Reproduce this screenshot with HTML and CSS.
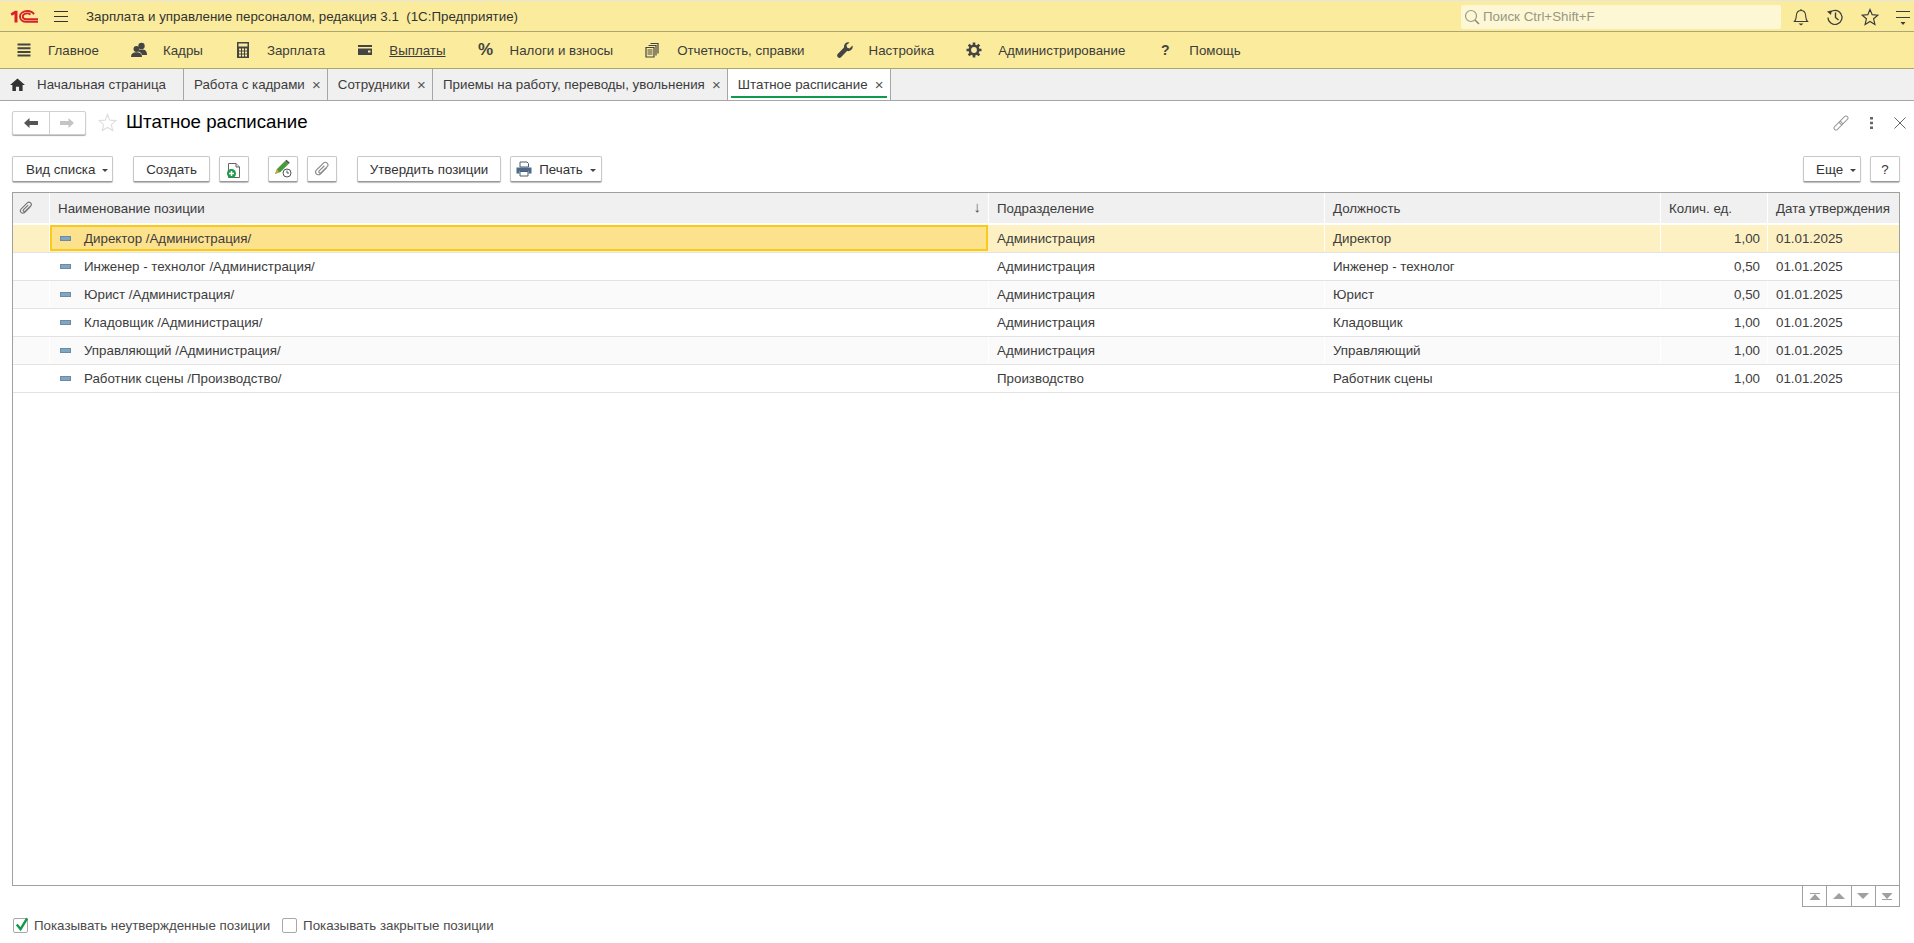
FILE: index.html
```html
<!DOCTYPE html>
<html lang="ru">
<head>
    <meta charset="UTF-8">
    <title>Штатное расписание</title>
    <link rel="stylesheet" href="styles.css">
</head>
<body>
    <div class="app">
        <header class="title-bar">
            <svg class="logo" viewBox="0 0 28 13" width="28" height="13">
                <path d="M0.5 3.5 L5 .8 H7.5 V12.5 H4.5 V4.2 L1.8 5.8Z" fill="#d8202a"/>
                <path d="M24 4.2 C22.5 1.8 20 1 17.5 1 C13.5 1 10 3 10 6.5 C10 10 13 11.8 16 11.8 H28" fill="none" stroke="#d8202a" stroke-width="1.9"/>
                <path d="M20.5 4.6 C19.5 3.7 18.5 3.4 17.3 3.4 C14.8 3.4 12.8 4.6 12.8 6.5 C12.8 8.2 14.5 9.3 16.5 9.3 H28" fill="none" stroke="#d8202a" stroke-width="1.9"/>
            </svg>
            <svg class="burger" viewBox="0 0 14 11" width="14" height="11"><path d="M0 .5H14M0 5.5H14M0 10.5H14" stroke="#333" fill="none"/></svg>
            <span class="app-name">Зарплата и управление персоналом, редакция 3.1&nbsp; (1С:Предприятие)</span>
            <div class="search">
                <svg viewBox="0 0 16 16" width="16" height="16"><circle cx="7" cy="7" r="5.5" fill="none" stroke="#9a9a86" stroke-width="1.2"/><path d="M11 11 L15 15" stroke="#8a8a78" stroke-width="1.6"/></svg>
                <span>Поиск Ctrl+Shift+F</span>
            </div>
            <div class="bar-icons">
                <svg viewBox="0 0 16 18" width="16" height="18"><path d="M1.5 13.5 C3.5 11.5 3 9 3.5 6.5 C4 3.5 6 2.5 8 2.5 C10 2.5 12 3.5 12.5 6.5 C13 9 12.5 11.5 14.5 13.5Z M8 1V2.5" fill="none" stroke="#3c3c3c" stroke-width="1.1"/><path d="M5.5 15.5H10.5L8 17.5Z" fill="#3c3c3c"/></svg>
                <svg viewBox="0 0 18 18" width="18" height="18"><path d="M3.6 5 A7 7 0 1 1 2 9.5" fill="none" stroke="#3c3c3c" stroke-width="1.2"/><path d="M1 3.5 L5.5 2.5 L5 7Z" fill="#3c3c3c"/><path d="M9.5 4.5V9.5L12.5 12" fill="none" stroke="#3c3c3c" stroke-width="1.4"/></svg>
                <svg viewBox="0 0 18 18" width="18" height="18"><path d="M9 1.5 L11.2 6.7 L16.8 7.2 L12.6 10.8 L13.9 16.4 L9 13.5 L4.1 16.4 L5.4 10.8 L1.2 7.2 L6.8 6.7Z" fill="none" stroke="#3c3c3c" stroke-width="1.2"/></svg>
                <svg viewBox="0 0 14 18" width="14" height="18"><path d="M0 3.5H14M0 9.5H14" stroke="#3c3c3c" fill="none"/><path d="M4.5 14H9.5L7 17Z" fill="#3c3c3c"/></svg>
            </div>
        </header>

        <nav class="sections">
            <a class="section"><svg viewBox="0 0 16 16" width="16" height="16"><path d="M1.5 2.5H14.5M1.5 6.2H14.5M1.5 9.9H14.5M1.5 13.6H14.5" stroke="#444" stroke-width="2" fill="none"/></svg>Главное</a>
            <a class="section"><svg viewBox="0 0 16 16" width="16" height="16"><circle cx="10.5" cy="4" r="3.2" fill="#444"/><path d="M6.5 9 C8 7 13 7 14.5 8.5 C16 10 16 12 16 13 H11 C11 11 9 10 6.5 9Z" fill="#444"/><circle cx="5.5" cy="7" r="3" fill="#444"/><path d="M0 15 C0 11 3 10.2 5.5 10.2 C8 10.2 11 11 11 15Z" fill="#444"/></svg>Кадры</a>
            <a class="section"><svg viewBox="0 0 16 16" width="16" height="16"><path fill-rule="evenodd" d="M2 0H14V16H2Z M3.5 1.5V4.5H12.5V1.5Z M4 6.5V8.5H6V6.5Z M7 6.5V8.5H9V6.5Z M10 6.5V8.5H12V6.5Z M4 9.5V11.5H6V9.5Z M7 9.5V11.5H9V9.5Z M10 9.5V11.5H12V9.5Z M4 12.5V14.5H6V12.5Z M7 12.5V14.5H9V12.5Z M10 12.5V14.5H12V12.5Z" fill="#444"/></svg>Зарплата</a>
            <a class="section current"><svg viewBox="0 0 16 16" width="16" height="16"><path fill-rule="evenodd" d="M1 3H15V5H1Z M1 6.5H15V13H1Z M11 8.5V10.5H13.5V8.5Z" fill="#444"/></svg><span class="section-name">Выплаты</span></a>
            <a class="section"><span class="percent">%</span>Налоги и взносы</a>
            <a class="section"><svg viewBox="0 0 16 16" width="16" height="16"><path d="M5.5 1.5H13V11.5M3.5 3.5H11V13.5M1 5.5H9V15H1Z" fill="#fbec9d" stroke="#444" stroke-width="1.2"/><path d="M2.5 8H7.5M2.5 10H7.5M2.5 12H7.5" stroke="#444"/></svg>Отчетность, справки</a>
            <a class="section"><svg viewBox="0 0 16 16" width="16" height="16"><path d="M15.5 3.5 L12.5 6.5 L10 5.5 L9.5 3 L12.5 0.5 C9.5 -0.5 6.5 2 7 5.5 L0.7 12 C-0.3 13 0 14.5 1 15.3 C2 16.2 3.2 16 4 15.2 L10 9 C13.5 9.8 16.5 7 15.5 3.5Z" fill="#444"/></svg>Настройка</a>
            <a class="section"><svg viewBox="0 0 16 16" width="16" height="16"><circle cx="8" cy="8" r="4.2" fill="none" stroke="#444" stroke-width="2.6"/><path d="M8 .5V3M8 13V15.5M.5 8H3M13 8H15.5M2.7 2.7L4.5 4.5M11.5 11.5L13.3 13.3M13.3 2.7L11.5 4.5M4.5 11.5L2.7 13.3" stroke="#444" stroke-width="2.6"/></svg>Администрирование</a>
            <a class="section"><span class="help-mark">?</span>Помощь</a>
        </nav>

        <div class="tabs">
            <div class="tab home">
                <svg viewBox="0 0 16 14" width="15" height="13"><path d="M8 .5 L16 7.5 H13.5 V14 H9.7 V9.5 H6.3 V14 H2.5 V7.5 H0Z" fill="#333"/></svg>
                Начальная страница
            </div>
            <div class="tab">Работа с кадрами<span class="tab-close">×</span></div>
            <div class="tab">Сотрудники<span class="tab-close">×</span></div>
            <div class="tab">Приемы на работу, переводы, увольнения<span class="tab-close">×</span></div>
            <div class="tab active">Штатное расписание<span class="tab-close">×</span></div>
        </div>

        <main class="form">
            <div class="form-head">
                <div class="history-btns">
                    <button class="hist-btn"><svg viewBox="0 0 14 10" width="14" height="10"><path d="M0 5 L5.5 0 V3 H14 V7 H5.5 V10Z" fill="#555"/></svg></button>
                    <button class="hist-btn"><svg viewBox="0 0 14 10" width="14" height="10"><path d="M14 5 L8.5 0 V3 H0 V7 H8.5 V10Z" fill="#c4c4c4"/></svg></button>
                </div>
                <svg class="fav" viewBox="0 0 20 20" width="19" height="19"><path d="M10 1.5 L12.5 7.5 L18.8 8 L14 12.2 L15.5 18.5 L10 15.2 L4.5 18.5 L6 12.2 L1.2 8 L7.5 7.5Z" fill="none" stroke="#dedede" stroke-width="1.2"/></svg>
                <h1>Штатное расписание</h1>
                <div class="form-actions">
                    <svg viewBox="0 0 16 16" width="16" height="16"><g transform="rotate(-45 8 8)" fill="none" stroke="#999"><rect x="-1" y="6" width="10" height="4" rx="2"/><rect x="7" y="6" width="10" height="4" rx="2"/></g></svg>
                    <svg viewBox="0 0 3 12" width="3" height="12"><path d="M0 0H3V2.6H0Z M0 4.7H3V7.3H0Z M0 9.4H3V12H0Z" fill="#666"/></svg>
                    <svg viewBox="0 0 12 12" width="12" height="12"><path d="M.5 .5L11.5 11.5M11.5 .5L.5 11.5" stroke="#666" fill="none"/></svg>
                </div>
            </div>

            <div class="toolbar">
                <button class="btn w-view">Вид списка<i class="caret"></i></button>
                <button class="btn w-create">Создать</button>
                <button class="btn icon-btn">
                    <svg viewBox="0 0 18 20" width="18" height="20"><path d="M3.5 4.5H11L14.5 8V18.5H3.5Z" fill="#fff" stroke="#666"/><path d="M11 4.5V8H14.5" fill="#ddd" stroke="#666"/><circle cx="6.5" cy="14.5" r="4.5" fill="#1d9a4b"/><path d="M4 14.5H9M6.5 12V17" stroke="#fff" stroke-width="1.5"/></svg>
                </button>
                <button class="btn icon-btn gap-left">
                    <svg viewBox="0 0 18 20" width="18" height="20"><path d="M1 15 L3 10 L11 2 L14.5 5 L6.5 13Z" fill="#4a9a3c"/><path d="M11 2 L12.5 .8 L15.8 3.8 L14.5 5Z" fill="#555"/><path d="M1 15 L3 10 L5 13Z" fill="#d6a62c"/><circle cx="13" cy="14" r="4" fill="#fff" stroke="#555"/><path d="M13 11.5V14H15" stroke="#555" fill="none"/></svg>
                </button>
                <button class="btn icon-btn">
                    <svg viewBox="0 0 18 18" width="17" height="17"><path d="M13.5 7 L7 13.5 C5.5 15 3.5 14.8 2.5 13.7 C1.4 12.5 1.4 10.7 2.7 9.4 L10 2.2 C11 1.2 12.7 1 13.9 2.2 C15 3.4 15 5 14 6 L7.5 12.3 C7 12.9 6 12.9 5.5 12.4 C4.9 11.8 5 11 5.5 10.4 L11 5" fill="none" stroke="#888" stroke-width="1.2"/></svg>
                </button>
                <button class="btn w-approve">Утвердить позиции</button>
                <button class="btn w-print">
                    <svg class="print-icon" viewBox="0 0 16 16" width="16" height="16"><path d="M4 1H11L12.5 2.5V6H4Z" fill="#fff" stroke="#4c5f73"/><path d="M0.5 6.5H15.5V12.5H12.5V10H3.5V12.5H.5Z" fill="#4c6a8a"/><path d="M4 10.5H12V15H4Z" fill="#fff" stroke="#4c5f73"/></svg>
                    Печать<i class="caret"></i>
                </button>
                <span class="toolbar-space"></span>
                <button class="btn w-more">Еще<i class="caret"></i></button>
                <button class="btn w-help">?</button>
            </div>

            <div class="list">
                <div class="list-head list-grid">
                    <div class="cell cell-clip"><svg viewBox="0 0 18 18" width="15" height="15"><path d="M13.5 7 L7 13.5 C5.5 15 3.5 14.8 2.5 13.7 C1.4 12.5 1.4 10.7 2.7 9.4 L10 2.2 C11 1.2 12.7 1 13.9 2.2 C15 3.4 15 5 14 6 L7.5 12.3 C7 12.9 6 12.9 5.5 12.4 C4.9 11.8 5 11 5.5 10.4 L11 5" fill="none" stroke="#777" stroke-width="1.4"/></svg></div>
                    <div class="cell">Наименование позиции<span class="sort-arrow">↓</span></div>
                    <div class="cell">Подразделение</div>
                    <div class="cell">Должность</div>
                    <div class="cell">Колич. ед.</div>
                    <div class="cell">Дата утверждения</div>
                </div>
                <div class="list-row list-grid selected">
                    <div class="cell"></div>
                    <div class="cell cell-name focus"><i class="row-mark"></i>Директор /Администрация/</div>
                    <div class="cell">Администрация</div>
                    <div class="cell">Директор</div>
                    <div class="cell num">1,00</div>
                    <div class="cell">01.01.2025</div>
                </div>
                <div class="list-row list-grid">
                    <div class="cell"></div>
                    <div class="cell cell-name"><i class="row-mark"></i>Инженер - технолог /Администрация/</div>
                    <div class="cell">Администрация</div>
                    <div class="cell">Инженер - технолог</div>
                    <div class="cell num">0,50</div>
                    <div class="cell">01.01.2025</div>
                </div>
                <div class="list-row list-grid alt">
                    <div class="cell"></div>
                    <div class="cell cell-name"><i class="row-mark"></i>Юрист /Администрация/</div>
                    <div class="cell">Администрация</div>
                    <div class="cell">Юрист</div>
                    <div class="cell num">0,50</div>
                    <div class="cell">01.01.2025</div>
                </div>
                <div class="list-row list-grid">
                    <div class="cell"></div>
                    <div class="cell cell-name"><i class="row-mark"></i>Кладовщик /Администрация/</div>
                    <div class="cell">Администрация</div>
                    <div class="cell">Кладовщик</div>
                    <div class="cell num">1,00</div>
                    <div class="cell">01.01.2025</div>
                </div>
                <div class="list-row list-grid alt">
                    <div class="cell"></div>
                    <div class="cell cell-name"><i class="row-mark"></i>Управляющий /Администрация/</div>
                    <div class="cell">Администрация</div>
                    <div class="cell">Управляющий</div>
                    <div class="cell num">1,00</div>
                    <div class="cell">01.01.2025</div>
                </div>
                <div class="list-row list-grid">
                    <div class="cell"></div>
                    <div class="cell cell-name"><i class="row-mark"></i>Работник сцены /Производство/</div>
                    <div class="cell">Производство</div>
                    <div class="cell">Работник сцены</div>
                    <div class="cell num">1,00</div>
                    <div class="cell">01.01.2025</div>
                </div>
            </div>

            <div class="pager">
                <div class="pager-btn"><svg viewBox="0 0 12 7" width="12" height="7"><path d="M1 .5H11" stroke="#a0a0a0" fill="none"/><path d="M6 1L11.5 7H.5Z" fill="#a0a0a0"/></svg></div>
                <div class="pager-btn"><svg viewBox="0 0 12 6" width="12" height="6"><path d="M6 0L12 6H0Z" fill="#a0a0a0"/></svg></div>
                <div class="pager-btn"><svg viewBox="0 0 12 6" width="12" height="6"><path d="M6 6L12 0H0Z" fill="#a0a0a0"/></svg></div>
                <div class="pager-btn"><svg viewBox="0 0 12 7" width="12" height="7"><path d="M1 6.5H11" stroke="#a0a0a0" fill="none"/><path d="M6 6L11.5 0H.5Z" fill="#a0a0a0"/></svg></div>
            </div>

            <div class="filters">
                <label class="check">
                    <span class="box"><svg class="tick" viewBox="0 0 16 16" width="15" height="15"><path d="M3 7 L7 12 L14 0.5" fill="none" stroke="#12994a" stroke-width="2.6"/></svg></span>
                    Показывать неутвержденные позиции
                </label>
                <label class="check">
                    <span class="box"></span>
                    Показывать закрытые позиции
                </label>
            </div>
        </main>
    </div>
</body>
</html>
```

FILE: styles.css
```css
* {
    box-sizing: border-box;
}
body {
    margin: 0;
    font-family: "Liberation Sans", Arial, sans-serif;
    font-size: 13.33px;
    color: #4b4b4b;
    background: #fff;
}
svg {
    display: block;
    flex: none;
}
.app {
    display: flex;
    flex-direction: column;
    height: 100vh;
    overflow: hidden;
}

/* top bar */
.title-bar {
    display: flex;
    align-items: center;
    height: 32px;
    padding-top: 1px;
    background: #fbec9d;
    border-top: 1px solid #e6e6e0;
    border-bottom: 1px solid #aca673;
}
.logo {
    margin-left: 10px;
}
.burger {
    margin-left: 16px;
}
.app-name {
    margin-left: 18px;
    color: #333;
}
.search {
    display: flex;
    align-items: center;
    gap: 3px;
    width: 320px;
    height: 24px;
    margin-left: auto;
    padding-left: 3px;
    background: #fdf7d5;
    border-radius: 2px;
    color: #97977f;
}
.bar-icons {
    display: flex;
    align-items: center;
    gap: 17px;
    width: 133px;
    padding-left: 12px;
}
.sections {
    display: flex;
    align-items: center;
    gap: 32px;
    height: 37px;
    padding-left: 16px;
    background: #fbec9d;
    border-bottom: 1px solid #aca673;
}
.section {
    display: flex;
    align-items: center;
    gap: 16px;
    color: #3c3c3c;
}
.section.current .section-name {
    text-decoration: underline;
}
.percent, .help-mark {
    width: 16px;
    text-align: center;
    font-size: 17px;
    font-weight: bold;
    color: #444;
}
.help-mark {
    font-size: 14px;
}

/* tabs */
.tabs {
    display: flex;
    height: 32px;
    background: #f0f0f0;
    border-bottom: 1px solid #a6a6a6;
}
.tab {
    position: relative;
    display: flex;
    align-items: center;
    padding: 0 6px 0 10px;
    border-right: 1px solid #a6a6a6;
    color: #3c3c3c;
}
.tab.home {
    gap: 12px;
    width: 184px;
}
.tab-close {
    width: 9px;
    margin-left: 7px;
    font-size: 15px;
    text-align: center;
    color: #555;
}
.tab.active {
    background: #fff;
}
.tab.active::after {
    content: "";
    position: absolute;
    left: 3px;
    right: 3px;
    bottom: 2px;
    height: 2px;
    background: #0f9a4e;
}

/* form */
.form {
    flex: 1;
    display: flex;
    flex-direction: column;
    min-height: 0;
    padding: 9px 14px 9px 12px;
}
.form-head {
    display: flex;
    align-items: center;
    height: 25px;
}
.history-btns {
    display: flex;
    width: 74px;
    height: 24px;
    background: #fff;
    border: 1px solid #d0d0d0;
    border-radius: 2px;
    box-shadow: 0 1px 1px #aaa;
}
.hist-btn {
    flex: 1;
    display: flex;
    align-items: center;
    justify-content: center;
    padding: 0;
    background: none;
    border: none;
}
.hist-btn:first-child {
    border-right: 1px solid #d0d0d0;
}
.fav {
    margin-left: 12px;
}
h1 {
    margin: 0 0 2px 9px;
    font-size: 18.67px;
    font-weight: normal;
    color: #000;
}
.form-actions {
    display: flex;
    align-items: center;
    gap: 21px;
    margin-left: auto;
    margin-right: -6px;
}

.toolbar {
    display: flex;
    align-items: center;
    gap: 9px;
    margin-top: 21px;
    height: 26px;
}
.btn {
    display: flex;
    align-items: center;
    justify-content: center;
    height: 26px;
    padding: 0;
    font: inherit;
    color: #333;
    background: #fff;
    border: 1px solid #c8c8c8;
    border-bottom-color: #999;
    border-radius: 2px;
    box-shadow: 0 1px 1px #bbb;
}
.w-view {
    justify-content: flex-start;
    width: 101px;
    margin-right: 11px;
    padding-left: 13px;
}
.w-create {
    width: 77px;
}
.icon-btn {
    width: 30px;
}
.gap-left {
    margin-left: 10px;
}
.w-approve {
    width: 144px;
    margin-left: 11px;
}
.w-print {
    width: 92px;
}
.print-icon {
    margin-right: 7px;
}
.w-more {
    justify-content: flex-start;
    width: 58px;
    padding-left: 12px;
}
.w-help {
    width: 30px;
}
.toolbar-space {
    flex: 1;
}
.caret {
    width: 0;
    height: 0;
    margin: 2px 0 0 7px;
    border: 3px solid transparent;
    border-top: 3px solid #444;
    border-bottom: none;
}

/* list */
.list {
    flex: 1;
    margin-top: 10px;
    border: 1px solid #a0a0a0;
    min-height: 0;
}
.list-grid {
    display: grid;
    grid-template-columns: 37px 939px 336px 336px 107px 1fr;
}
.list-head {
    height: 32px;
    background: #f0f0f0;
    background-clip: padding-box;
    border-bottom: 2px solid #fff;
    color: #3c3c3c;
}
.cell {
    display: flex;
    align-items: center;
    padding: 0 7px 0 8px;
    border-right: 1px solid #fff;
    min-width: 0;
    white-space: nowrap;
}
.list-head .cell {
    position: relative;
    height: 30px;
}
.list-head .cell:last-child, .list-row .cell:last-child {
    border-right: none;
}
.cell-clip {
    padding: 0 0 0 6px;
}
.sort-arrow {
    position: absolute;
    right: 7px;
    top: 5px;
    font-size: 15px;
    color: #555;
}
.list-row {
    height: 28px;
    padding-bottom: 1px;
    border-bottom: 1px solid #e3e3e3;
    color: #3c3c3c;
}
.list-row.alt {
    background: #fafafa;
}
.list-row.selected {
    background: #fdf1c4;
}
.num {
    justify-content: flex-end;
}
.cell-name {
    padding-left: 10px;
}
.row-mark {
    width: 11px;
    height: 5px;
    margin-right: 13px;
    background: #7fa7c4;
    border: 1px solid #6b8ba3;
}
.cell-name.focus {
    margin-right: 1px;
    background: #fde28e;
    border: 2px solid #fbc91c;
    padding-left: 8px;
}

.pager {
    display: flex;
    align-self: flex-end;
    margin-top: -1px;
    width: 98px;
    height: 22px;
    border: 1px solid #a0a0a0;
}
.pager-btn {
    flex: 1;
    display: flex;
    align-items: center;
    justify-content: center;
    border-right: 1px solid #a0a0a0;
}
.pager-btn:last-child {
    border-right: none;
}
.filters {
    display: flex;
    gap: 12px;
    height: 17px;
    margin-top: 10px;
    padding-left: 1px;
}
.check {
    display: flex;
    align-items: center;
    gap: 6px;
    color: #4b4b4b;
}
.box {
    width: 15px;
    height: 15px;
    background: #fff;
    border: 1px solid #a8a8a8;
    border-radius: 2px;
}
.tick {
    overflow: visible;
    margin-top: -1px;
}
```
